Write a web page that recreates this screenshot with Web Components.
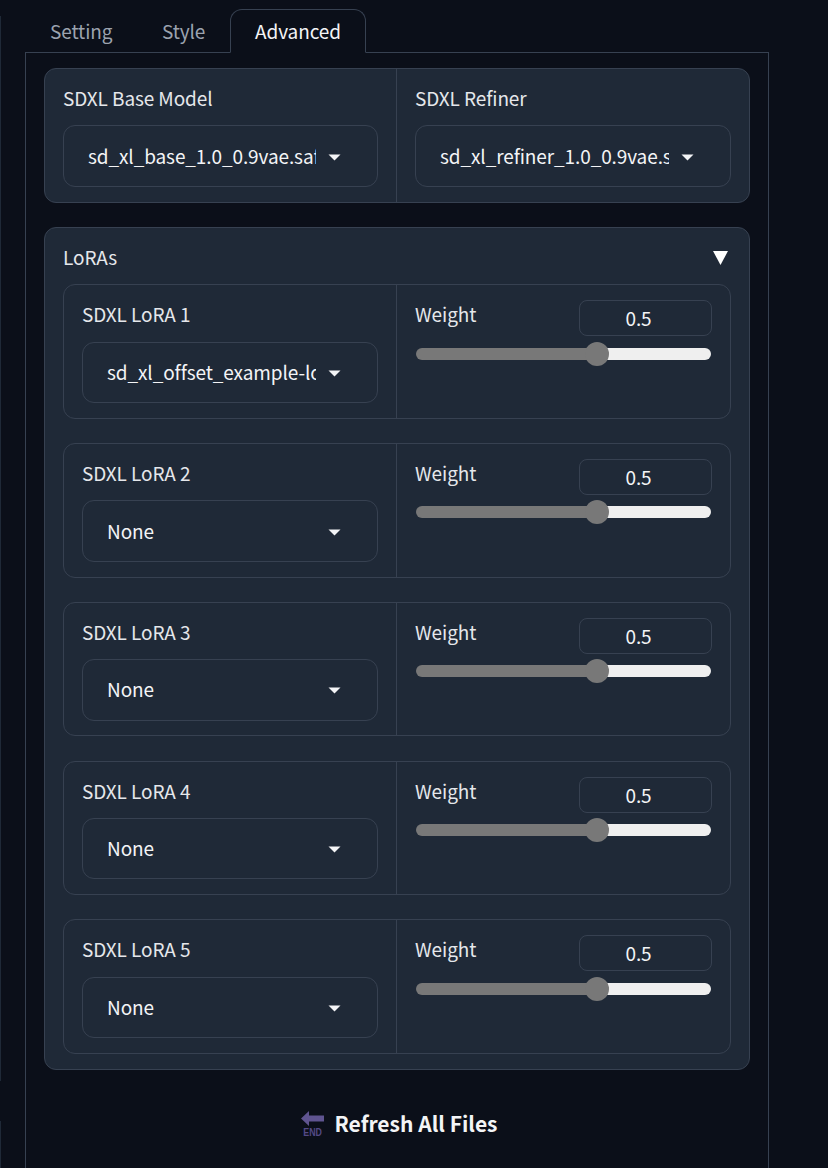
<!DOCTYPE html>
<html>
<head>
<meta charset="utf-8">
<style>
  html, body { margin: 0; height: 100%; overflow: hidden; background: #0b0f19; }
  body { font-family: "Noto Sans CJK SC", "Noto Sans", sans-serif; color: #f3f4f6; padding-top: 9px; box-sizing: border-box; }
</style>
</head>
<body>
<script>
class TabBar extends HTMLElement {
    constructor() {
        super();
        this.attachShadow({ mode: 'open' });
        this.shadowRoot.innerHTML = `
            <style>
                :host { display: flex; height: 44px; box-sizing: border-box; padding-left: 25px; font-size: 19px; letter-spacing: -0.1px; }
                div { box-sizing: border-box; height: 44px; line-height: 43px; color: #9ca3af; }
                .setting { padding-left: 25px; width: 137px; }
                .style { width: 68px; }
                .active {
                    width: 136px; text-align: center; color: #f3f4f6;
                    border: 1px solid #374151; border-bottom: 1px solid #0b0f19;
                    border-radius: 12px 12px 0 0; line-height: 41px;
                    position: relative; z-index: 1;
                }
            </style>
            <div class="setting">Setting</div>
            <div class="style">Style</div>
            <div class="active">Advanced</div>
        `;
    }
}

class SelectBox extends HTMLElement {
    constructor() {
        super();
        this.attachShadow({ mode: 'open' });
        this.shadowRoot.innerHTML = `
            <style>
                :host { display: flex; align-items: center; box-sizing: border-box; height: 61.5px; padding: 0 36px 0 24px; border: 1px solid #374151; border-radius: 12px; font-size: 19px; letter-spacing: -0.1px; color: #f3f4f6; }
                span { flex: 1; min-width: 0; overflow: hidden; white-space: nowrap; padding-bottom: 2px; }
                svg { flex: none; margin: 2px 0 0 12px; }
            </style>
            <span><slot></slot></span>
            <svg width="13" height="7" viewBox="0 0 13 7"><path d="M0.5 0.5h12L6.5 6.5z" fill="#f3f4f6"/></svg>
        `;
    }
}

class ModelCard extends HTMLElement {
    constructor() {
        super();
        this.attachShadow({ mode: 'open' });
        this.shadowRoot.innerHTML = `
            <style>
                :host { display: grid; grid-template-columns: 1fr 1fr; box-sizing: border-box; height: 135px; border: 1px solid #374151; border-radius: 12px; background: #1f2937; }
                ::slotted(*) { min-width: 0; }
                ::slotted(:first-child) { border-right: 1px solid #374151; }
            </style>
            <slot></slot>
        `;
    }
}

class DropField extends HTMLElement {
    constructor() {
        super();
        this.attachShadow({ mode: 'open' });
        this.shadowRoot.innerHTML = `
            <style>
                :host { display: block; box-sizing: border-box; padding: 16px 18px 0; font-size: 19px; letter-spacing: -0.1px; }
                .label { height: 40.25px; line-height: 26px; color: #e5e7eb; }
            </style>
            <div class="label"></div>
            <select-box><slot></slot></select-box>
        `;
    }
    connectedCallback() {
        this.shadowRoot.querySelector('.label').textContent = this.getAttribute('label');
    }
}

class WeightField extends HTMLElement {
    constructor() {
        super();
        this.attachShadow({ mode: 'open' });
        this.shadowRoot.innerHTML = `
            <style>
                :host { display: block; box-sizing: border-box; padding: 15px 18px 0; font-size: 19px; letter-spacing: -0.1px; }
                .top { display: flex; justify-content: space-between; height: 36px; }
                .label { line-height: 28px; color: #e5e7eb; }
                .num { box-sizing: border-box; width: 133px; height: 36px; border: 1px solid #374151; border-radius: 8px; text-align: center; line-height: 34px; color: #f3f4f6; padding-right: 14px; }
                .track { display: flex; align-items: center; height: 24px; margin: 5.25px 1px 0 1px; }
                .fill { flex: none; width: 181px; height: 12px; background: #787878; border-radius: 6px 0 0 6px; }
                .thumb { flex: none; width: 24px; height: 24px; margin-left: -12px; border-radius: 50%; background: #787878; position: relative; }
                .rest { flex: 1; height: 12px; margin-left: -10px; background: #efefef; border-radius: 0 6px 6px 0; }
            </style>
            <div class="top"><div class="label">Weight</div><div class="num">0.5</div></div>
            <div class="track"><div class="fill"></div><div class="thumb"></div><div class="rest"></div></div>
        `;
    }
}

class LoraRow extends HTMLElement {
    constructor() {
        super();
        this.attachShadow({ mode: 'open' });
        this.shadowRoot.innerHTML = `
            <style>
                :host { display: block; }
                model-card { height: 134.6px; }
            </style>
            <model-card>
                <drop-field><slot></slot></drop-field>
                <weight-field></weight-field>
            </model-card>
        `;
    }
    connectedCallback() {
        this.shadowRoot.querySelector('drop-field').setAttribute('label', this.getAttribute('label'));
        this.shadowRoot.querySelector('drop-field').connectedCallback();
    }
}

class LoraPanel extends HTMLElement {
    constructor() {
        super();
        this.attachShadow({ mode: 'open' });
        this.shadowRoot.innerHTML = `
            <style>
                :host { display: block; box-sizing: border-box; border: 1px solid #374151; border-radius: 12px; background: #1f2937; padding: 16px 18px 15px; font-size: 19px; letter-spacing: -0.1px; }
                .head { display: flex; justify-content: space-between; align-items: center; height: 28px; margin-bottom: 12.4px; color: #e5e7eb; }
                .head span { line-height: 26px; margin-bottom: 2px; }
                .rows { display: flex; flex-direction: column; gap: 24.15px; }
                svg { margin-right: 3px; }
            </style>
            <div class="head"><span>LoRAs</span><svg width="15" height="14" viewBox="0 0 15 14"><path d="M0 0h15L7.5 14z" fill="#fff"/></svg></div>
            <div class="rows"><slot></slot></div>
        `;
    }
}

class RefreshButton extends HTMLElement {
    constructor() {
        super();
        this.attachShadow({ mode: 'open' });
        this.shadowRoot.innerHTML = `
            <style>
                :host { display: flex; justify-content: center; align-items: center; gap: 10px; height: 50px; padding-left: 5px; font-size: 21px; font-weight: 600; color: #f3f4f6; }
                .end { display: flex; flex-direction: column; align-items: center; width: 23px; gap: 2px; }
                svg { display: block; }
                .end span { font: 700 11px/9px "Liberation Sans", sans-serif; color: #544a86; transform: scaleX(.8); }
                .text { margin-bottom: 2px; }
            </style>
            <div class="end">
                <svg width="23" height="15" viewBox="0 0 23 15"><path d="M0 7.5L8 0v4.5h15v6H8V15z" fill="#5f5490"/></svg>
                <span>END</span>
            </div>
            <div class="text">Refresh All Files</div>
        `;
    }
}

class TabPanel extends HTMLElement {
    constructor() {
        super();
        this.attachShadow({ mode: 'open' });
        this.shadowRoot.innerHTML = `
            <style>
                :host { display: flex; flex-direction: column; box-sizing: border-box; width: 744px; height: 1116px; margin: -1px 0 0 25px; border: 1px solid #374151; border-bottom: 0; padding: 15px 18px 0; }
                ::slotted(*) { flex: none; }
                ::slotted(lora-panel) { margin-top: 24px; }
                ::slotted(refresh-button) { margin-top: 29px; }
            </style>
            <slot></slot>
        `;
    }
}

class SideEdge extends HTMLElement {
    constructor() {
        super();
        this.attachShadow({ mode: 'open' });
        this.shadowRoot.innerHTML = `
            <style>
                :host { display: block; position: absolute; left: 0; top: 0; width: 1px; height: 1168px; }
                div { position: absolute; left: 0; width: 1px; background: #1f2937; }
            </style>
            <div style="top:16px;height:1065px"></div>
            <div style="top:1121px;height:47px"></div>
        `;
    }
}

customElements.define('tab-bar', TabBar);
customElements.define('select-box', SelectBox);
customElements.define('model-card', ModelCard);
customElements.define('drop-field', DropField);
customElements.define('weight-field', WeightField);
customElements.define('lora-row', LoraRow);
customElements.define('lora-panel', LoraPanel);
customElements.define('refresh-button', RefreshButton);
customElements.define('tab-panel', TabPanel);
customElements.define('side-edge', SideEdge);
</script>

<side-edge></side-edge>
<tab-bar></tab-bar>
<tab-panel>
  <model-card>
    <drop-field label="SDXL Base Model">sd_xl_base_1.0_0.9vae.safetensors</drop-field>
    <drop-field label="SDXL Refiner">sd_xl_refiner_1.0_0.9vae.safetensors</drop-field>
  </model-card>
  <lora-panel>
    <lora-row label="SDXL LoRA 1">sd_xl_offset_example-lora_1.0.safetensors</lora-row>
    <lora-row label="SDXL LoRA 2">None</lora-row>
    <lora-row label="SDXL LoRA 3">None</lora-row>
    <lora-row label="SDXL LoRA 4">None</lora-row>
    <lora-row label="SDXL LoRA 5">None</lora-row>
  </lora-panel>
  <refresh-button></refresh-button>
</tab-panel>
</body>
</html>
